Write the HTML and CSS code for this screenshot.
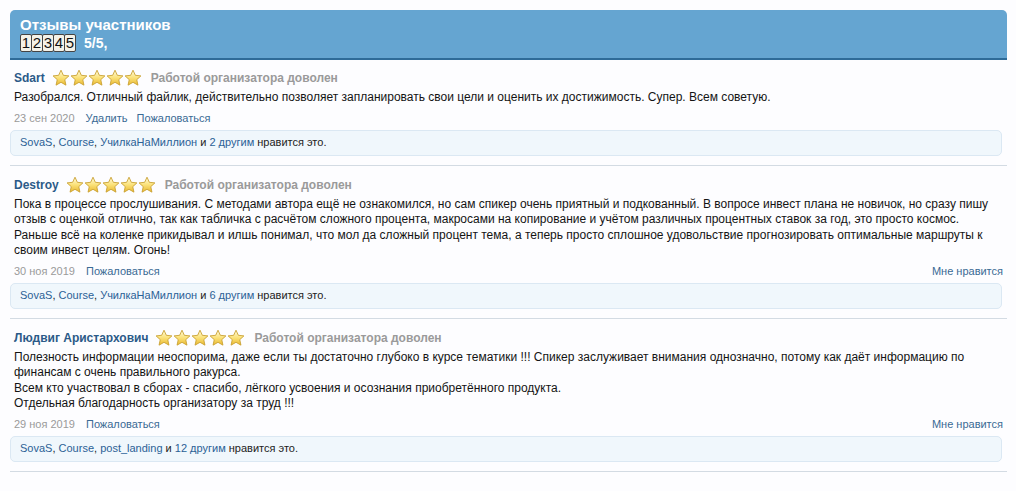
FILE: index.html
```html
<!DOCTYPE html>
<html lang="ru">
<head>
<meta charset="utf-8">
<title>Отзывы участников</title>
<link rel="stylesheet" href="styles.css">
</head>
<body>
<svg width="0" height="0" class="defs" aria-hidden="true">
  <defs>
    <linearGradient id="starFill" x1="0" y1="0" x2="0" y2="1">
      <stop offset="0" stop-color="#fffbe0"/>
      <stop offset="0.5" stop-color="#fbe27a"/>
      <stop offset="1" stop-color="#e9b830"/>
    </linearGradient>
    <symbol id="star" viewBox="0 0 18 18">
      <path d="M9 1.2l2.35 5.1 5.55.6-4.15 3.75 1.2 5.5L9 13.3l-4.95 2.85 1.2-5.5L1.1 6.9l5.55-.6z" fill="url(#starFill)" stroke="#c9a233" stroke-width="0.9" stroke-linejoin="round"/>
    </symbol>
  </defs>
</svg>

<div class="reviews">
  <div class="head">
    <h3 class="head-title">Отзывы участников</h3>
    <div class="head-rating">
      <span class="digit">1</span><span class="digit">2</span><span class="digit">3</span><span class="digit">4</span><span class="digit">5</span>
      <span class="score">5/5,</span>
    </div>
  </div>

  <div class="review">
    <div class="review-top">
      <a class="user">Sdart</a>
      <span class="stars"><svg><use href="#star"/></svg><svg><use href="#star"/></svg><svg><use href="#star"/></svg><svg><use href="#star"/></svg><svg><use href="#star"/></svg></span>
      <span class="verdict">Работой организатора доволен</span>
    </div>
    <div class="text">Разобрался. Отличный файлик, действительно позволяет запланировать свои цели и оценить их достижимость. Супер. Всем советую.</div>
    <div class="meta">
      <div class="meta-left"><span class="date">23 сен 2020</span><a class="ctrl">Удалить</a><a class="ctrl">Пожаловаться</a></div>
    </div>
    <div class="likes"><a>SovaS</a>, <a>Course</a>, <a>УчилкаНаМиллион</a> и <a>2 другим</a> нравится это.</div>
  </div>

  <div class="review">
    <div class="review-top">
      <a class="user">Destroy</a>
      <span class="stars"><svg><use href="#star"/></svg><svg><use href="#star"/></svg><svg><use href="#star"/></svg><svg><use href="#star"/></svg><svg><use href="#star"/></svg></span>
      <span class="verdict">Работой организатора доволен</span>
    </div>
    <div class="text">Пока в процессе прослушивания. С методами автора ещё не ознакомился, но сам спикер очень приятный и подкованный. В вопросе инвест плана не новичок, но сразу пишу отзыв с оценкой отлично, так как табличка с расчётом сложного процента, макросами на копирование и учётом различных процентных ставок за год, это просто космос.<br>Раньше всё на коленке прикидывал и илшь понимал, что мол да сложный процент тема, а теперь просто сплошное удовольствие прогнозировать оптимальные маршруты к своим инвест целям. Огонь!</div>
    <div class="meta">
      <div class="meta-left"><span class="date">30 ноя 2019</span><a class="ctrl">Пожаловаться</a></div>
      <a class="ctrl like">Мне нравится</a>
    </div>
    <div class="likes"><a>SovaS</a>, <a>Course</a>, <a>УчилкаНаМиллион</a> и <a>6 другим</a> нравится это.</div>
  </div>

  <div class="review">
    <div class="review-top">
      <a class="user">Людвиг Аристархович</a>
      <span class="stars"><svg><use href="#star"/></svg><svg><use href="#star"/></svg><svg><use href="#star"/></svg><svg><use href="#star"/></svg><svg><use href="#star"/></svg></span>
      <span class="verdict">Работой организатора доволен</span>
    </div>
    <div class="text">Полезность информации неоспорима, даже если ты достаточно глубоко в курсе тематики !!! Спикер заслуживает внимания однозначно, потому как даёт информацию по финансам с очень правильного ракурса.<br>Всем кто участвовал в сборах - спасибо, лёгкого усвоения и осознания приобретённого продукта.<br>Отдельная благодарность организатору за труд !!!</div>
    <div class="meta">
      <div class="meta-left"><span class="date">29 ноя 2019</span><a class="ctrl">Пожаловаться</a></div>
      <a class="ctrl like">Мне нравится</a>
    </div>
    <div class="likes"><a>SovaS</a>, <a>Course</a>, <a>post_landing</a> и <a>12 другим</a> нравится это.</div>
  </div>
</div>
</body>
</html>
```

FILE: styles.css
```css
html, body {
  margin: 0;
  padding: 0;
  background: #fdfdff;
}

body {
  font-family: "Liberation Sans", Arial, sans-serif;
  font-size: 12px;
  color: #141414;
}

.defs {
  position: absolute;
  width: 0;
  height: 0;
}

a {
  color: #2b5d8c;
  text-decoration: none;
  cursor: pointer;
}

.reviews {
  padding: 10px 9px 0 10px;
}

/* section header */
.head {
  background: #65a5d1;
  border-radius: 5px 5px 0 0;
  border-bottom: 2px solid #2e6b98;
  padding: 6px 10px 6px;
  color: #fff;
}

.head-title {
  margin: 0;
  font-size: 15px;
  line-height: 17px;
  font-weight: bold;
}

.head-rating {
  display: flex;
  align-items: center;
  height: 19px;
}

.digit {
  display: inline-block;
  width: 10px;
  height: 16px;
  line-height: 16px;
  text-align: center;
  font-size: 15px;
  color: #111;
  background: #f4f2e8;
  border: 1px solid #444;
  border-radius: 2px;
  margin-right: -1px;
}

.score {
  margin-left: 9px;
  font-weight: bold;
  font-size: 14px;
}

/* single review */
.review {
  border-bottom: 1px solid #d3dbe3;
  padding: 9px 0 9px 4px;
}

.review + .review {
  padding-top: 10px;
}

.review-top {
  display: flex;
  align-items: center;
  height: 18px;
  font-weight: bold;
}

.user {
  color: #2b5a88;
}

.stars {
  display: flex;
  margin: 0 9px 0 7px;
}

.stars svg {
  width: 18px;
  height: 18px;
  display: block;
}

.verdict {
  color: #9a9a9a;
}

.text {
  margin-top: 3px;
  line-height: 15.5px;
}

.meta {
  display: flex;
  justify-content: space-between;
  margin-top: 5px;
  font-size: 11px;
  line-height: 14px;
}

.meta-left {
  display: flex;
  gap: 9px;
}

.date {
  color: #9a9a9a;
  margin-right: 2px;
}

.ctrl {
  color: #3a6a94;
}

.like {
  margin-right: 4px;
}

.likes {
  margin: 5px 5px 0 -4px;
  padding: 5px 9px 6px;
  line-height: 13px;
  font-size: 11px;
  color: #222;
  background: #f0f7fc;
  border: 1px solid #dbe8f3;
  border-radius: 5px;
}

.likes a {
  color: #2b6196;
}
```
